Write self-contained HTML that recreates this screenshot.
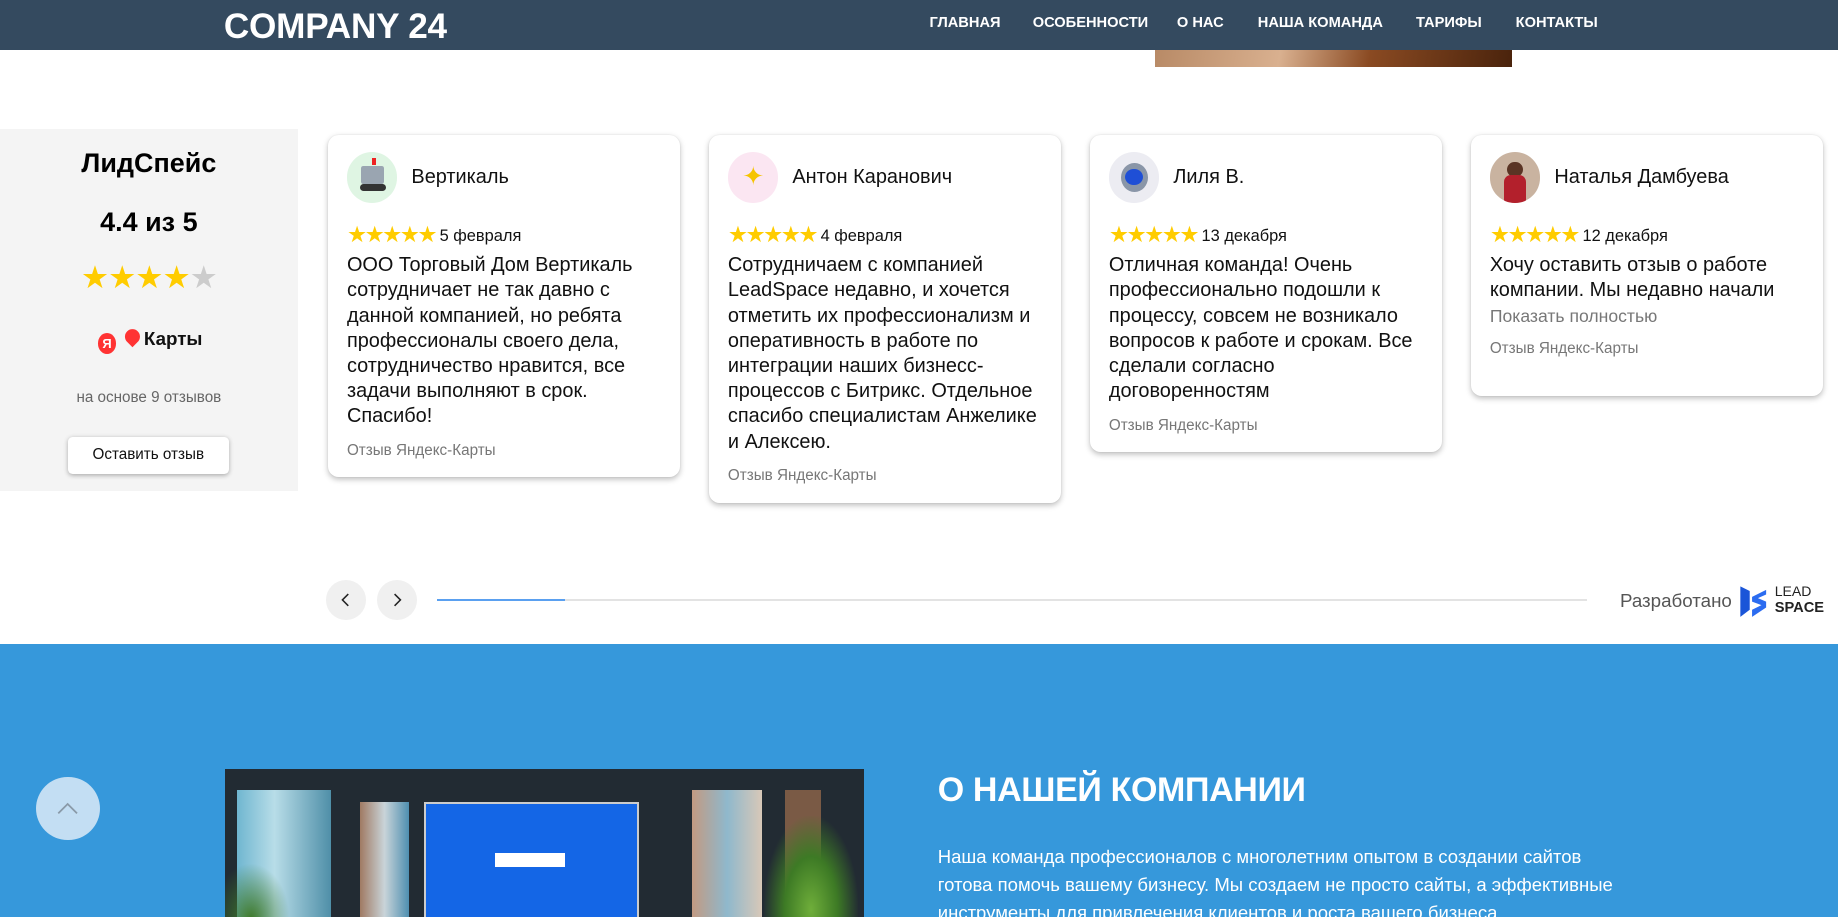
<!DOCTYPE html>
<html><head><meta charset="utf-8">
<style>
*{margin:0;padding:0;box-sizing:border-box}
html,body{width:1838px;height:917px;overflow:hidden;background:#fff}
#w{zoom:1.17219;width:1568px;height:783px;position:relative;overflow:hidden;font-family:"Liberation Sans",Arial,sans-serif}
.abs{position:absolute}
header{position:absolute;left:0;top:0;width:1568px;height:43px;background:#344a5f}
.logo{position:absolute;left:191px;top:6px;color:#fff;font-weight:bold;font-size:30px;letter-spacing:-0.2px}
.nav{position:absolute;top:13px;color:#fff;font-weight:bold;font-size:12.5px}
.panel{left:0;top:110px;width:254px;height:309px;background:#f4f4f4;text-align:center}
.card{background:#fff;border-radius:9px;box-shadow:0 2px 5px rgba(0,0,0,.25),0 0 1px rgba(0,0,0,.1);width:300px;top:115px}
.av{position:absolute;left:16px;top:15px;width:43px;height:43px;border-radius:50%;overflow:hidden}
.nm{position:absolute;left:71px;top:27px;font-size:17px;color:#111}
.st{position:absolute;left:16px;top:74px;font-size:14px;color:#111;white-space:nowrap}
.st b{color:#fc0;font-size:19px;letter-spacing:-2px;font-weight:normal;vertical-align:-1px;margin-right:0px}
.tx{position:absolute;left:16px;top:101px;width:275px;font-size:17px;line-height:21.5px;color:#111}
.ft{font-size:13px;color:#777;margin-top:7px}
.btn{position:absolute;border-radius:50%;width:34px;height:34px;background:#f0f0f0;top:495px}
</style></head><body><div id="w">
<header>
<div class="logo">COMPANY 24</div>
<div class="nav" style="left:793px">ГЛАВНАЯ</div>
<div class="nav" style="left:881px">ОСОБЕННОСТИ</div>
<div class="nav" style="left:1004px">О НАС</div>
<div class="nav" style="left:1073px">НАША КОМАНДА</div>
<div class="nav" style="left:1208px">ТАРИФЫ</div>
<div class="nav" style="left:1293px">КОНТАКТЫ</div>
</header>
<div class="abs" style="left:985px;top:43px;width:305px;height:14px;background:linear-gradient(100deg,#b88a66 0%,#d9b08f 35%,#8a4a22 60%,#4a230c 100%)"></div>

<div class="abs panel">
<div style="font-weight:bold;font-size:23px;margin-top:16px;color:#000">ЛидСпейс</div>
<div style="font-weight:bold;font-size:23px;margin-top:24px;color:#000">4.4 из 5</div>
<div style="font-size:27px;margin-top:18px;letter-spacing:-1px"><span style="color:#fc0">★★★★</span><span style="color:#ccc">★</span></div>
<div style="margin-top:27px;font-size:16px;font-weight:bold;color:#111;padding-left:2px">
<span style="display:inline-block;width:16px;height:18px;border-radius:50%;background:#f33;color:#fff;font-size:11px;line-height:18px;vertical-align:-3px">Я</span>
<span style="display:inline-block;width:13px;height:13px;border-radius:50% 50% 50% 0;transform:rotate(-45deg);background:#f33;vertical-align:0px;margin:0 3px"></span>Карты</div>
<div style="font-size:13px;color:#666;margin-top:30px">на основе 9 отзывов</div>
<div style="position:absolute;left:58px;top:263px;width:137px;height:31px;background:#fff;border-radius:4px;box-shadow:0 1px 4px rgba(0,0,0,.3);font-size:13px;line-height:31px;color:#111">Оставить отзыв</div>
</div>

<div class="abs card" style="left:280px;height:292px">
<div class="av" style="background:#dff5e3"><div style="position:absolute;left:12px;top:12px;width:20px;height:15px;background:#9aa5b1;border-radius:2px"></div><div style="position:absolute;left:11px;top:27px;width:22px;height:6px;background:#333;border-radius:3px"></div><div style="position:absolute;left:21px;top:5px;width:4px;height:6px;background:#e22"></div></div>
<div class="nm">Вертикаль</div>
<div class="st"><b>★★★★★</b> 5 февраля</div>
<div class="tx">ООО Торговый Дом Вертикаль сотрудничает не так давно с данной компанией, но ребята профессионалы своего дела, сотрудничество нравится, все задачи выполняют в срок. Спасибо!<div class="ft">Отзыв Яндекс-Карты</div></div>
</div>
<div class="abs card" style="left:605px;height:314px">
<div class="av" style="background:#fbe6f2;text-align:center;line-height:43px;font-size:22px;color:#f5c400">✦</div>
<div class="nm">Антон Каранович</div>
<div class="st"><b>★★★★★</b> 4 февраля</div>
<div class="tx">Сотрудничаем с компанией LeadSpace недавно, и хочется отметить их профессионализм и оперативность в работе по интеграции наших бизнесс-процессов с Битрикс. Отдельное спасибо специалистам Анжелике и Алексею.<div class="ft">Отзыв Яндекс-Карты</div></div>
</div>
<div class="abs card" style="left:930px;height:271px">
<div class="av" style="background:#ececf2"><div style="position:absolute;left:10px;top:9px;width:23px;height:25px;border-radius:50%;background:#8a96a8"></div><div style="position:absolute;left:14px;top:14px;width:15px;height:14px;border-radius:50%;background:#1f4fd6"></div></div>
<div class="nm">Лиля В.</div>
<div class="st"><b>★★★★★</b> 13 декабря</div>
<div class="tx">Отличная команда! Очень профессионально подошли к процессу, совсем не возникало вопросов к работе и срокам. Все сделали согласно договоренностям<div class="ft">Отзыв Яндекс-Карты</div></div>
</div>
<div class="abs card" style="left:1255px;height:223px">
<div class="av" style="background:#c9b3a0"><div style="position:absolute;left:15px;top:8px;width:13px;height:13px;border-radius:50%;background:#5a3424"></div><div style="position:absolute;left:12px;top:19px;width:19px;height:24px;background:#b3202c;border-radius:6px 6px 0 0"></div></div>
<div class="nm">Наталья Дамбуева</div>
<div class="st"><b>★★★★★</b> 12 декабря</div>
<div class="tx">Хочу оставить отзыв о работе компании. Мы недавно начали<div style="color:#777;font-size:15px;line-height:22px">Показать полностью</div><div class="ft" style="margin-top:6px">Отзыв Яндекс-Карты</div></div>
</div>

<div class="btn" style="left:278px"><svg width="34" height="34"><path d="M19 12l-5 5 5 5" fill="none" stroke="#222" stroke-width="1.3"/></svg></div>
<div class="btn" style="left:322px"><svg width="34" height="34"><path d="M15 12l5 5-5 5" fill="none" stroke="#222" stroke-width="1.3"/></svg></div>
<div class="abs" style="left:373px;top:511px;width:981px;height:2px;background:#e3e3e3"></div>
<div class="abs" style="left:373px;top:511px;width:109px;height:2px;background:#5aa0f0"></div>
<div class="abs" style="left:1382px;top:503px;font-size:16px;color:#555">Разработано</div>
<svg class="abs" style="left:1483px;top:498px" width="26" height="30"><path d="M2 2l8 4v16l-8 6z" fill="#1a55d8"/><path d="M24 5l-12 6v4l8 3-8 4v6l12-8v-5l-7-3 7-3z" fill="#2b6cf0"/></svg>
<div class="abs" style="left:1514px;top:497px;font-size:12px;line-height:14px;color:#222">LEAD<br><b style="font-size:12.5px">SPACE</b></div>

<div class="abs" style="left:0;top:549px;width:1568px;height:240px;background:#3698db"></div>
<div class="abs" style="left:192px;top:656px;width:545px;height:130px;background:#222b33;overflow:hidden">
<div class="abs" style="left:10px;top:18px;width:80px;height:120px;background:linear-gradient(90deg,#6fb6d0,#b8dde8 40%,#4f8fa8)"></div>
<div class="abs" style="left:115px;top:28px;width:42px;height:110px;background:linear-gradient(90deg,#a07a63,#c9d4d9 50%,#4e8fb0)"></div>
<div class="abs" style="left:398px;top:18px;width:60px;height:110px;background:linear-gradient(90deg,#c29a82,#8fb8cc 50%,#d8c8b8)"></div>
<div class="abs" style="left:478px;top:18px;width:30px;height:110px;background:#7a5a45"></div>
<div class="abs" style="left:170px;top:28px;width:183px;height:110px;background:#1466e6;border:2px solid #ccc"></div>
<div class="abs" style="left:230px;top:72px;width:60px;height:12px;background:#fff"></div>
<div class="abs" style="left:0;top:80px;width:55px;height:60px;background:radial-gradient(ellipse at 40% 80%,#3f7a2a,transparent 70%)"></div>
<div class="abs" style="left:460px;top:40px;width:80px;height:100px;background:radial-gradient(ellipse at 50% 80%,#6fae3a,#3d7a25 40%,transparent 72%)"></div>
</div>
<div class="abs" style="left:800px;top:658px;font-size:29px;font-weight:bold;color:#fff;letter-spacing:-0.3px">О НАШЕЙ КОМПАНИИ</div>
<div class="abs" style="left:800px;top:719px;width:590px;font-size:15.8px;line-height:24px;color:#fff">Наша команда профессионалов с многолетним опытом в создании сайтов готова помочь вашему бизнесу. Мы создаем не просто сайты, а эффективные инструменты для привлечения клиентов и роста вашего бизнеса.</div>
<div class="abs" style="left:31px;top:663px;width:54px;height:54px;border-radius:50%;background:#c3def3"><svg width="54" height="54"><path d="M19 31l8-8 8 8" fill="none" stroke="#8a9aa8" stroke-width="1.5"/></svg></div>
</div></body></html>
